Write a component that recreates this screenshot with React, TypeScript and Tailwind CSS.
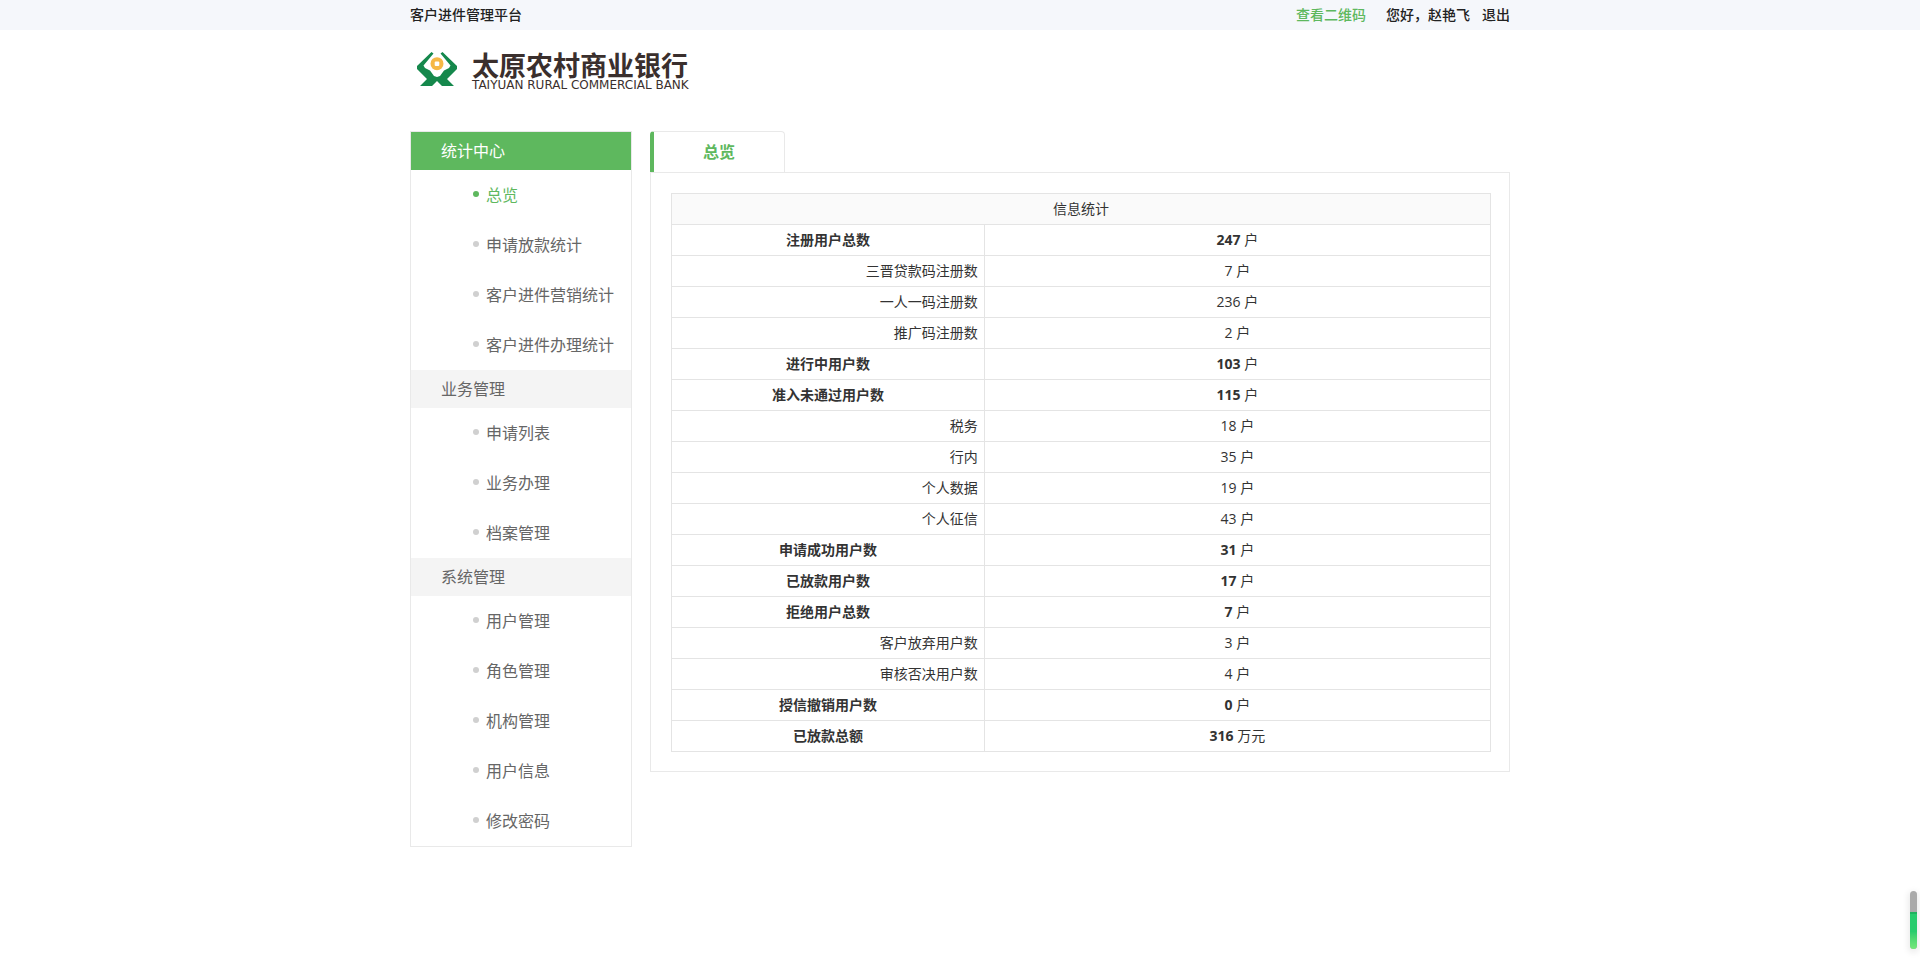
import clsx from 'clsx';

type StatRow = {
  label: string;
  value: number;
  unit?: string;
  detail?: boolean;
};

const menu = [
  { title: '统计中心', items: ['总览', '申请放款统计', '客户进件营销统计', '客户进件办理统计'] },
  { title: '业务管理', items: ['申请列表', '业务办理', '档案管理'] },
  { title: '系统管理', items: ['用户管理', '角色管理', '机构管理', '用户信息', '修改密码'] },
];

const stats: StatRow[] = [
  { label: '注册用户总数', value: 247 },
  { label: '三晋贷款码注册数', value: 7, detail: true },
  { label: '一人一码注册数', value: 236, detail: true },
  { label: '推广码注册数', value: 2, detail: true },
  { label: '进行中用户数', value: 103 },
  { label: '准入未通过用户数', value: 115 },
  { label: '税务', value: 18, detail: true },
  { label: '行内', value: 35, detail: true },
  { label: '个人数据', value: 19, detail: true },
  { label: '个人征信', value: 43, detail: true },
  { label: '申请成功用户数', value: 31 },
  { label: '已放款用户数', value: 17 },
  { label: '拒绝用户总数', value: 7 },
  { label: '客户放弃用户数', value: 3, detail: true },
  { label: '审核否决用户数', value: 4, detail: true },
  { label: '授信撤销用户数', value: 0 },
  { label: '已放款总额', value: 316, unit: '万元' },
];

function TopBar() {
  return (
    <div className="bg-[#f5f7fb]">
      <div className="mx-auto flex h-[30px] max-w-[1100px] items-center justify-between font-medium text-[#222]">
        <span>客户进件管理平台</span>
        <div className="flex items-center">
          <a href="#qrcode" className="mr-5 text-[#5eb85e]">
            查看二维码
          </a>
          <span className="mr-3">您好，赵艳飞</span>
          <a href="#logout">退出</a>
        </div>
      </div>
    </div>
  );
}

function Logo() {
  return (
    <div className="flex items-start gap-[15px] pl-[7px]">
      <svg viewBox="0 0 40 34" className="h-[34px] w-10" aria-hidden="true">
        <g fill="#15884c">
          <path d="M14.5 0 L16.5 1.5 L6.5 13.5 L8 16 L13 18.5 L17 24 L20 25 L20 29 L15 34 L3 34 L10 27 L0 17 L0 14 Z" />
          <path d="M25.5 0 L23.5 1.5 L33.5 13.5 L32 16 L27 18.5 L23 24 L20 25 L20 29 L25 34 L37 34 L30 27 L40 17 L40 14 Z" />
        </g>
        <circle cx="20" cy="11.7" r="6.5" fill="#f6b846" />
        <rect x="17.7" y="9.4" width="4.6" height="4.6" rx="1" fill="#fff" />
      </svg>
      <div className="text-[#3a2f2d]">
        <div className="text-[27px] leading-[27px] font-bold">太原农村商业银行</div>
        <div className="font-['DejaVu_Sans'] text-xs leading-3 whitespace-nowrap">
          TAIYUAN RURAL COMMERCIAL BANK
        </div>
      </div>
    </div>
  );
}

function Sidebar() {
  return (
    <nav className="w-[222px] shrink-0 border border-[#e9e9e9] text-base text-[#666]">
      {menu.map((group, i) => (
        <div key={group.title}>
          <h2
            className={clsx(
              'h-[38px] pl-[30px] leading-[38px]',
              i === 0 ? 'bg-[#5eb85e] text-white' : 'bg-[#f4f4f4]'
            )}
          >
            {group.title}
          </h2>
          <ul>
            {group.items.map((item) => (
              <li key={item}>
                <a
                  href="#menu"
                  className={clsx(
                    'flex h-[50px] items-center gap-[7px] pl-[62px]',
                    item === '总览' && 'text-[#5eb85e]'
                  )}
                >
                  <span
                    className={clsx(
                      'mb-0.5 size-[6px] rounded-full',
                      item === '总览' ? 'bg-[#5eb85e]' : 'bg-[#d0d0d0]'
                    )}
                  />
                  {item}
                </a>
              </li>
            ))}
          </ul>
        </div>
      ))}
    </nav>
  );
}

function StatsTable() {
  return (
    <table className="w-full table-fixed border-collapse text-center text-[#333]">
      <colgroup>
        <col className="w-[38.2%]" />
        <col />
      </colgroup>
      <thead>
        <tr className="h-[31px] bg-[#fafafa]">
          <th colSpan={2} className="border border-[#e4e4e4] font-normal">
            信息统计
          </th>
        </tr>
      </thead>
      <tbody>
        {stats.map((row) => (
          <tr key={row.label} className="h-[31px]">
            <th
              scope="row"
              className={clsx(
                'border border-[#e4e4e4] px-[6px]',
                row.detail ? 'text-right font-normal' : 'font-bold'
              )}
            >
              {row.label}
            </th>
            <td className="border border-[#e4e4e4]">
              <span className={clsx(!row.detail && 'font-bold')}>{row.value}</span> {row.unit ?? '户'}
            </td>
          </tr>
        ))}
      </tbody>
    </table>
  );
}

export default function App() {
  return (
    <div className="font-['Open_Sans','Noto_Sans_CJK_SC',sans-serif] text-sm leading-5">
      <TopBar />
      <div className="mx-auto max-w-[1100px]">
        <header className="h-[101px] pt-[22px]">
          <Logo />
        </header>
        <div className="flex items-start gap-[18px]">
          <Sidebar />
          <main className="min-w-0 flex-1">
            <button
              type="button"
              className="block h-[41px] w-[135px] rounded-t border-t border-r border-l-4 border-[#e9e9e9] border-l-[#5eb85e] text-base font-bold text-[#5eb85e]"
            >
              总览
            </button>
            <div className="border border-[#e9e9e9] pt-5 pr-[18px] pb-[19px] pl-5">
              <StatsTable />
            </div>
          </main>
        </div>
      </div>
      {/* Floating scroll gauge */}
      <div className="fixed right-[3px] bottom-[14px] flex h-[58px] w-[7px] flex-col overflow-hidden rounded-full bg-[#aaa] shadow-[0_2px_6px_2px_rgba(0,0,0,0.08)]">
        <div className="mt-[21px] flex-1 border-t-2 border-[#1fb35f] bg-linear-to-b from-[#27cc6d] from-50% to-[#74e87a]" />
      </div>
    </div>
  );
}
